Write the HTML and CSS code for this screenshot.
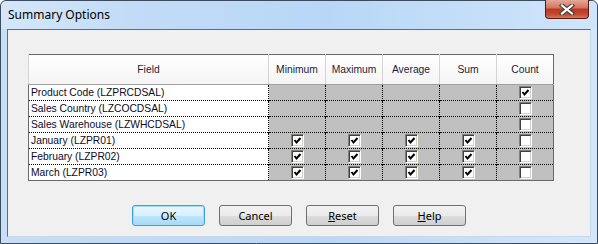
FILE: index.html
```html
<!DOCTYPE html>
<html lang="en">
<head>
  <meta charset="UTF-8">
  <title>Summary Options</title>
  <link rel="stylesheet" href="styles.css">
</head>
<body>

  <div class="window">
    <!-- Title bar -->
    <div class="titlebar">
      <span class="title">Summary Options</span>
      <div class="close">
        <svg width="16" height="11" viewBox="0 0 16 11">
          <path d="M3 1.5 L13 9.5 M13 1.5 L3 9.5" stroke="#3b3b3b" stroke-width="4.2" stroke-linecap="square"/>
          <path d="M3 1.5 L13 9.5 M13 1.5 L3 9.5" stroke="#ffffff" stroke-width="2.2" stroke-linecap="square"/>
        </svg>
      </div>
    </div>

    <!-- Client area -->
    <div class="client">
      <table class="grid">
        <colgroup>
          <col class="c-field">
          <col class="c-num">
          <col class="c-num">
          <col class="c-num">
          <col class="c-num">
          <col class="c-count">
        </colgroup>
        <thead>
          <tr>
            <th>Field</th>
            <th>Minimum</th>
            <th>Maximum</th>
            <th>Average</th>
            <th>Sum</th>
            <th>Count</th>
          </tr>
        </thead>
        <tbody>
          <tr>
            <td class="field">Product Code (LZPRCDSAL)</td>
            <td class="off"></td><td class="off"></td><td class="off"></td><td class="off"></td>
            <td class="off"><span class="chk on"></span></td>
          </tr>
          <tr>
            <td class="field">Sales Country (LZCOCDSAL)</td>
            <td class="off"></td><td class="off"></td><td class="off"></td><td class="off"></td>
            <td class="off"><span class="chk"></span></td>
          </tr>
          <tr>
            <td class="field">Sales Warehouse (LZWHCDSAL)</td>
            <td class="off"></td><td class="off"></td><td class="off"></td><td class="off"></td>
            <td class="off"><span class="chk"></span></td>
          </tr>
          <tr>
            <td class="field">January (LZPR01)</td>
            <td class="off"><span class="chk on"></span></td>
            <td class="off"><span class="chk on"></span></td>
            <td class="off"><span class="chk on"></span></td>
            <td class="off"><span class="chk on"></span></td>
            <td class="off"><span class="chk"></span></td>
          </tr>
          <tr>
            <td class="field">February (LZPR02)</td>
            <td class="off"><span class="chk on"></span></td>
            <td class="off"><span class="chk on"></span></td>
            <td class="off"><span class="chk on"></span></td>
            <td class="off"><span class="chk on"></span></td>
            <td class="off"><span class="chk"></span></td>
          </tr>
          <tr>
            <td class="field">March (LZPR03)</td>
            <td class="off"><span class="chk on"></span></td>
            <td class="off"><span class="chk on"></span></td>
            <td class="off"><span class="chk on"></span></td>
            <td class="off"><span class="chk on"></span></td>
            <td class="off"><span class="chk"></span></td>
          </tr>
        </tbody>
      </table>

      <div class="buttons">
        <button class="btn default">OK</button>
        <button class="btn">Cancel</button>
        <button class="btn"><u>R</u>eset</button>
        <button class="btn"><u>H</u>elp</button>
      </div>
    </div>
  </div>

</body>
</html>
```

FILE: styles.css
```css
/* General */
body {
  margin: 0;
  background: #ffffff;
  font-family: "Liberation Sans", Arial, sans-serif;
}

/* Window frame */
.window {
  width: 598px;
  height: 244px;
  box-sizing: border-box;
  border: 1px solid #3c4b5e;
  border-radius: 6px 6px 0 0;
  background: linear-gradient(to right, #c6def6, #b9d8f7 55%, #d3e7fb);
  display: flex;
  flex-direction: column;
}

.titlebar {
  height: 28px;
  display: flex;
  align-items: flex-start;
  padding-left: 7px;
  background: linear-gradient(to right, #d4e7fa 0%, #c2dcf6 22%, #b8d7f6 55%, #cfe5fb 100%);
  border-radius: 6px 6px 0 0;
}

.title {
  font-family: "Noto Sans", "Open Sans", sans-serif;
  font-size: 12px;
  color: #000;
  line-height: 28px;
}

.close {
  margin-left: auto;
  margin-right: 8px;
  margin-top: -1px;
  width: 44px;
  height: 19px;
  box-sizing: border-box;
  border: 1px solid #58190f;
  border-top: none;
  border-radius: 0 0 4px 4px;
  background: linear-gradient(to bottom, #e7a899 0%, #d2735d 45%, #b9381f 50%, #c54a30 80%, #d9785d 100%);
  display: flex;
  align-items: center;
  justify-content: center;
}

/* Client area */
.client {
  flex: 1;
  margin: 0 6px 6px 6px;
  background: #f0f0f0;
  border-top: 1px solid #6b6b6b;
  border-left: 1px solid #6b6b6b;
  border-right: 1px solid #c8d8e8;
  border-bottom: 1px solid #c8d8e8;
  padding: 24px 0 0 20px;
}

/* Grid */
.grid {
  border-collapse: collapse;
  table-layout: fixed;
  width: 525px;
  border: 1px solid #6a6a6a;
  font-size: 10.3px;
  color: #000;
}

.c-field { width: 240px; }
.c-num { width: 57px; }
.c-count { width: 57px; }

.grid th {
  height: 29px;
  padding: 0;
  font-weight: normal;
  background: linear-gradient(to bottom, #ffffff, #f4f4f4);
  border-left: 1px solid #d5d5d5;
  border-bottom: 1px solid #a0a0a0;
  text-align: center;
  color: #1c1c3a;
}

.grid td {
  height: 15px;
  padding: 0;
  border-top: 1px dotted #000;
  border-left: 1px dotted #000;
  text-align: center;
  line-height: 15px;
}

.grid td.field {
  background: #ffffff;
  text-align: left;
  padding-left: 2px;
  white-space: nowrap;
  color: #0a0a28;
}

.grid td.off {
  background: #c0c0c0;
}

/* Checkbox */
.chk {
  display: inline-block;
  vertical-align: middle;
  width: 13px;
  height: 13px;
  box-sizing: border-box;
  border: 1px solid;
  border-color: #808080 #ffffff #ffffff #808080;
  box-shadow: inset 1px 1px #404040, inset -1px -1px #d4d0c8;
  background: #ffffff;
  margin-top: -1px;
}

.chk.on {
  background: #ffffff url("data:image/svg+xml;utf8,<svg xmlns='http://www.w3.org/2000/svg' width='11' height='11'><path d='M2.5 5 L4.5 7.5 L8.5 3' fill='none' stroke='black' stroke-width='2'/></svg>") no-repeat center;
}

/* Buttons */
.buttons {
  display: flex;
  gap: 14px;
  margin-top: 24px;
  padding-left: 104px;
}

.btn {
  width: 73px;
  height: 21px;
  padding: 0;
  border: 1px solid #707070;
  border-radius: 3px;
  background: linear-gradient(to bottom, #f2f2f2 0%, #ebebeb 50%, #dddddd 51%, #cfcfcf 100%);
  font-family: "Noto Sans", "Open Sans", sans-serif;
  font-size: 11px;
  color: #000;
  line-height: 18px;
}

.btn.default {
  border-color: #3c9fd8;
  box-shadow: inset 0 0 0 1px #9ee0fb;
  background: linear-gradient(to bottom, #eaf6fd 0%, #d9f0fc 50%, #bee6fd 51%, #a7d9f5 100%);
}
```
